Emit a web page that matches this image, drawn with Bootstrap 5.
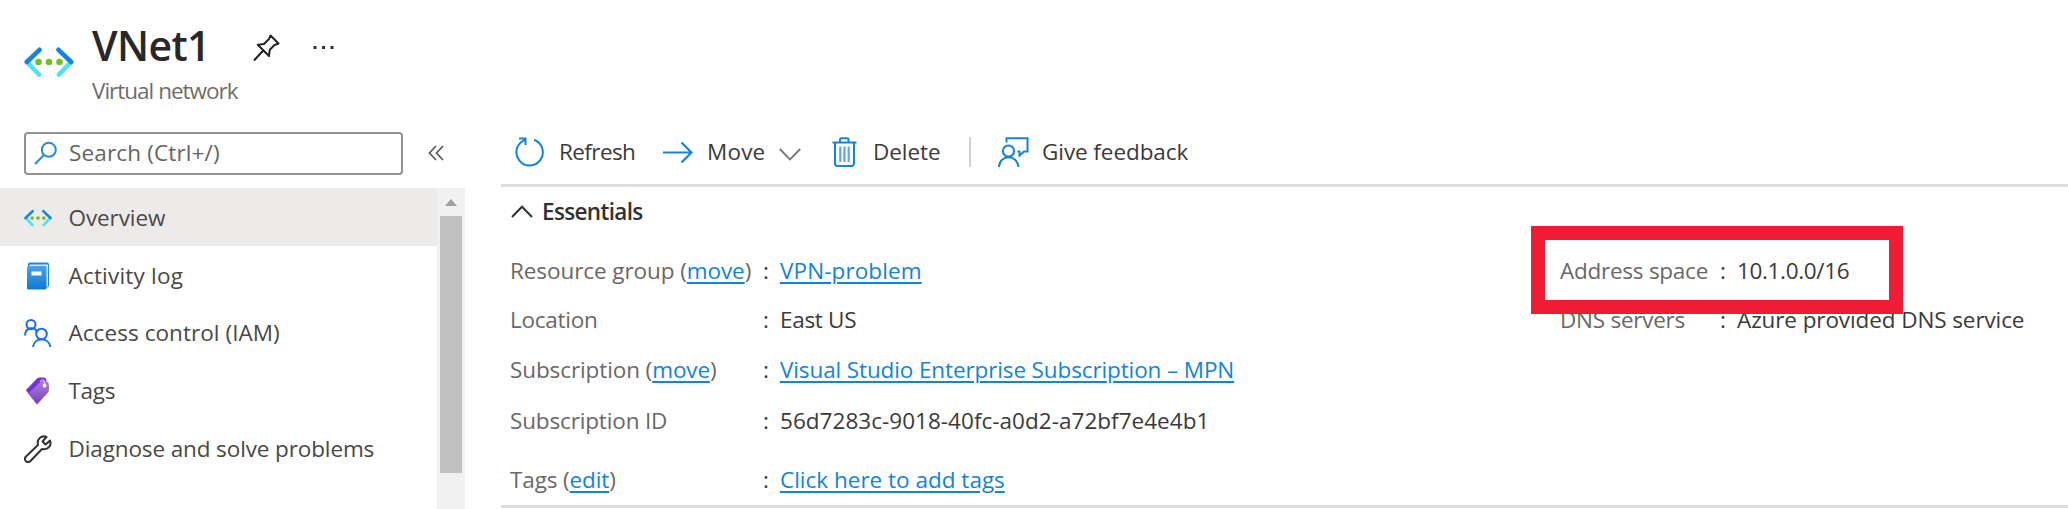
<!DOCTYPE html>
<html lang="en">
<head>
<meta charset="utf-8">
<meta name="viewport" content="width=device-width, initial-scale=1">
<title>VNet1 - Virtual network</title>
<link href="https://cdn.jsdelivr.net/npm/bootstrap@5.3.0/dist/css/bootstrap.min.css" rel="stylesheet">
<style>
  body { font-family: "Open Sans", sans-serif; font-size: 22.5px; line-height: 30px; letter-spacing: -.08px; color: #3b3a39; background: #fff; }
  .portal { height: 509px; }
  .blade-head { height: 121px; padding: 15px 0 0 24px; }
  .blade-head .res-icon { margin-top: 32px; margin-right: 18px; }
  .blade-title { font-size: 41px; line-height: 60px; font-weight: 600; letter-spacing: -.6px; color: #292827; width: 161px; }
  .blade-sub { letter-spacing: -1px; color: #6f6d6b; padding-top: 1px; }
  .menu-col { width: 501px; }
  .search-row { height: 67px; padding: 11px 0 0 24px; }
  .search-field { width: 379px; height: 43px; border: 2px solid #949290; border-radius: 4px; padding: 0 0 2px 8px; color: #666462; letter-spacing: .15px; }
  .search-field svg { margin-right: 11px; }
  .menu-list { width: 437px; }
  .menu-list .list-group-item { height: 57.8px; padding: 2px 0 0 24px; gap: 16.5px; border: 0; border-radius: 0; color: #4a4846; background: none; }
  .menu-list .list-group-item.selected { background: #edebe9; }
  .track { width: 28px; background: #f1f1f1; padding-top: 11px; }
  .thumb { width: 22px; height: 257px; background: #c1c1c1; margin-top: 10px; }
  .commands { height: 66px; border-bottom: 3px solid #dfdedd; padding: 0 0 1px 14px; }
  .commands .btn { font-size: inherit; line-height: 30px; letter-spacing: inherit; color: #3b3a39; }
  .sep { width: 2px; height: 30px; background: #d2d0ce; }
  .essentials-toggle { height: 58px; padding: 0 0 9px 10px; gap: 9px; font-weight: 600; letter-spacing: -.65px; color: #323130; }
  .facts { height: 263px; border-bottom: 3px solid #dfdedd; padding: 1px 0 0 9px; }
  .fact-row { height: 50.3px; }
  .fact-row:first-child { height: 49px; }
  .fact-row.tags-row { height: 67px; padding-top: 1px; }
  .fact-name { width: 253px; color: #6a6866; }
  .fact-name.near { width: 160px; letter-spacing: -.25px; }
  .colon { width: 17px; }
  .facts a { color: #1583da; text-decoration-thickness: 2px; text-underline-offset: 3px; }
  .facts-right { width: 508px; }
  .callout { left: -29px; top: -20px; width: 372px; height: 88px; border: 14px solid #f01c36; }
</style>
</head>
<body>
<svg width="0" height="0" class="position-absolute">
  <defs>
    <linearGradient id="book" x1="0" y1="0" x2="0" y2="1"><stop offset="0" stop-color="#45a5ec"/><stop offset="1" stop-color="#1078d4"/></linearGradient>
    <linearGradient id="tag" x1="0" y1="0" x2="0" y2="1"><stop offset="0" stop-color="#b07ce4"/><stop offset="1" stop-color="#7244b0"/></linearGradient>
    <symbol id="vnet" viewBox="0 0 50 30">
      <g fill="none" stroke-width="4.6" stroke-linecap="round"><path d="M15 27.5 3 15M35 27.5 47 15" stroke="#4be4fb"/><path d="M15.500 2.800 2.800 15M34.500 2.800 47.200 15" stroke="#1285de"/></g>
      <g fill="#72c023"><circle cx="14.500" cy="15" r="3.300"/><circle cx="25" cy="15" r="3.300"/><circle cx="35.500" cy="15" r="3.300"/></g>
    </symbol>
  </defs>
</svg>
<div class="portal overflow-hidden">
  <header class="blade-head d-flex align-items-start">
    <svg class="res-icon" width="50" height="30"><use href="#vnet"/></svg>
    <div>
      <div class="d-flex align-items-start">
        <h1 class="blade-title mb-0">VNet1</h1>
        <svg class="mt-3" width="28" height="32" viewBox="0 0 28 32" fill="none" stroke="#222" stroke-width="2" stroke-linejoin="round"><path d="M17.500 4.500 25.500 12.500 21.500 14 16.800 18.800 16 25 4.800 13.800 11 13 15.800 8.300ZM10 19.700 1 29.500"/></svg>
        <svg class="ms-4" style="margin-top:29px" width="40" height="8" fill="#323130"><rect x="8.500" y="2" width="3" height="3"/><rect x="17" y="2" width="3" height="3"/><rect x="25.500" y="2" width="3" height="3"/></svg>
      </div>
      <div class="blade-sub">Virtual network</div>
    </div>
  </header>
  <div class="d-flex">
    <aside class="menu-col flex-shrink-0">
      <div class="search-row d-flex">
        <div class="search-field d-flex align-items-center">
          <svg width="24" height="24" viewBox="0 0 24 24" fill="none" stroke="#2b88d8" stroke-width="2"><circle cx="14.800" cy="8.800" r="7"/><path d="M10 14 1 23"/></svg>
          <span>Search (Ctrl+/)</span>
        </div>
        <svg class="ms-4" style="margin-top:13px" width="20" height="16" viewBox="0 0 20 16" fill="none" stroke="#605e5c" stroke-width="1.8"><path d="M9 1 2.500 8 9 15M16 1 9.500 8 16 15"/></svg>
      </div>
      <div class="d-flex">
        <nav class="menu-list list-group">
          <div class="list-group-item selected d-flex align-items-center"><svg width="28" height="18"><use href="#vnet"/></svg><span style="letter-spacing:-.1px">Overview</span></div>
          <div class="list-group-item d-flex align-items-center">
            <svg width="28" height="28" viewBox="0 0 28 28"><rect x="4" y=".5" width="21" height="25" rx="2" fill="#2389d8"/><path d="M6 2.500H24V24.500H22V4H5Z" fill="#d8eaf8"/><rect x="3" y="4" width="19.500" height="23.500" rx="1.500" fill="url(#book)"/><rect x="7.500" y="9.500" width="10" height="4" fill="#fff"/></svg>
            <span style="letter-spacing:.2px">Activity log</span></div>
          <div class="list-group-item d-flex align-items-center">
            <svg width="28" height="28" viewBox="0 0 28 28" fill="none" stroke="#1c6cf0" stroke-width="2"><circle cx="7" cy="5.500" r="4.500"/><path d="M1 16.500C1.500 7.500 11 7.500 13 13"/><circle cx="17.500" cy="15" r="5.300"/><path d="M9 28C10.500 17.800 24.500 17.800 26.500 28"/></svg>
            <span style="letter-spacing:.06px">Access control (IAM)</span></div>
          <div class="list-group-item d-flex align-items-center">
            <svg width="28" height="28" viewBox="0 0 28 28"><path d="M2 13 13 1.500Q14 .5 16 .5H20Q22.500 1 22.500 4V8L8 19 3 15Z" fill="#7432d8"/><path d="M4 16.500 17 4.500Q18.500 3 21 4L24.500 5.500Q25.500 12 24.500 15L13 27.500Z" fill="url(#tag)"/><circle cx="20.500" cy="8.500" r="1.900" fill="#fff"/><path d="M16 5Q17 1.800 20 3L21 7" fill="none" stroke="#e4d4f8" stroke-width="1"/></svg>
            <span style="letter-spacing:-.3px">Tags</span></div>
          <div class="list-group-item d-flex align-items-center">
            <svg width="28" height="28" viewBox="0 0 28 28" fill="none" stroke="#333" stroke-width="2" stroke-linejoin="round"><path d="M22.500 2C18 0 12.500 3.500 14 10L2 21.500C.2 23.500.8 25.500 2 26.200 3.500 27.500 5.500 27 6.500 26L18 14C24 15.500 28 10.500 26 5.500L21.500 9.500 18.500 6.500Z"/></svg>
            <span style="letter-spacing:-.12px">Diagnose and solve problems</span></div>
        </nav>
        <div class="track d-flex flex-column align-items-center" style="height:321px">
          <svg class="flex-shrink-0" width="12" height="7"><path d="M0 7 6 0 12 7Z" fill="#a0a0a0"/></svg>
          <div class="thumb flex-shrink-0"></div>
        </div>
      </div>
    </aside>
    <main class="flex-grow-1">
      <div class="commands d-flex align-items-center">
        <button class="btn d-flex align-items-center border-0 p-0" style="width:148px"><svg style="margin-right:14px" width="30" height="30" viewBox="0 0 30 30" fill="none" stroke="#1583da" stroke-width="2"><path d="M19 2.800A13.200 13.200 0 1 1 9.500 3.100M4 1.500H10.500V8"/></svg><span style="letter-spacing:-.6px">Refresh</span></button>
        <button class="btn d-flex align-items-center border-0 p-0" style="width:169px"><svg style="margin-right:14px" width="30" height="30" viewBox="0 0 30 30" fill="none" stroke="#1583da" stroke-width="2.200"><path d="M0 15.500H28.500M18.500 5.500 28.500 15.500 18.500 25.500"/></svg><span style="letter-spacing:.2px">Move</span><svg style="margin:5px 0 0 14px" width="22" height="13" fill="none" stroke="#777573" stroke-width="1.800"><path d="M.8 1 11 11.500 21.200 1"/></svg></button>
        <button class="btn d-flex align-items-center border-0 p-0" style="width:137px"><svg style="margin-right:16px" width="25" height="30" viewBox="0 0 25 30" fill="none" stroke="#1583da" stroke-width="2"><path d="M.5 5.500H24.500M8 5V2.500Q8 1.200 9.300 1.200H15Q16.500 1.200 16.500 2.500V5M3 5.500V26Q3 29 5.500 29H19.500Q22 29 22 26V5.500"/><path d="M8.300 9.500V25M12.500 9.500V25M16.700 9.500V25" stroke-width="2.200" stroke="#5ba9e6"/></svg><span>Delete</span></button>
        <div class="sep"></div>
        <button class="btn d-flex align-items-center border-0 p-0" style="margin-left:27px"><svg style="margin-right:13px" width="31" height="30" viewBox="0 0 31 30" fill="none" stroke="#1583da" stroke-width="2"><path d="M8.500 5.500V1.200H29.500V14.500H26L21.500 18.500V14.500H19.500"/><circle cx="10.500" cy="14" r="5.600"/><path d="M1 30C1.500 17 19.500 17 20.500 30"/></svg><span>Give feedback</span></button>
      </div>
      <div class="essentials-toggle d-flex align-items-center"><svg width="22" height="13" fill="none" stroke="#323130" stroke-width="2"><path d="M1 12 11 1.800 21 12"/></svg>Essentials</div>
      <div class="facts d-flex justify-content-between">
        <div>
          <div class="fact-row d-flex align-items-center"><span class="fact-name">Resource group (<a href="#">move</a>)</span><span class="colon">:</span><a href="#" style="letter-spacing:.1px">VPN-problem</a></div>
          <div class="fact-row d-flex align-items-center"><span class="fact-name" style="letter-spacing:-.25px">Location</span><span class="colon">:</span><span style="letter-spacing:-.3px">East US</span></div>
          <div class="fact-row d-flex align-items-center"><span class="fact-name" style="letter-spacing:-.1px">Subscription (<a href="#">move</a>)</span><span class="colon">:</span><a href="#" style="letter-spacing:-.12px">Visual Studio Enterprise Subscription – MPN</a></div>
          <div class="fact-row d-flex align-items-center"><span class="fact-name" style="letter-spacing:-.15px">Subscription ID</span><span class="colon">:</span><span style="letter-spacing:.03px">56d7283c-9018-40fc-a0d2-a72bf7e4e4b1</span></div>
          <div class="fact-row tags-row d-flex align-items-center"><span class="fact-name" style="letter-spacing:-.12px">Tags (<a href="#">edit</a>)</span><span class="colon">:</span><a href="#" style="letter-spacing:0">Click here to add tags</a></div>
        </div>
        <div class="facts-right position-relative">
          <div class="fact-row d-flex align-items-center"><span class="fact-name near">Address space</span><span class="colon">:</span><span style="letter-spacing:-.35px">10.1.0.0/16</span></div>
          <div class="fact-row d-flex align-items-center"><span class="fact-name near">DNS servers</span><span class="colon">:</span><span style="letter-spacing:-.1px">Azure provided DNS service</span></div>
          <div class="callout position-absolute"></div>
        </div>
      </div>
    </main>
  </div>
</div>
<script src="https://cdn.jsdelivr.net/npm/bootstrap@5.3.0/dist/js/bootstrap.bundle.min.js"></script>
</body>
</html>
